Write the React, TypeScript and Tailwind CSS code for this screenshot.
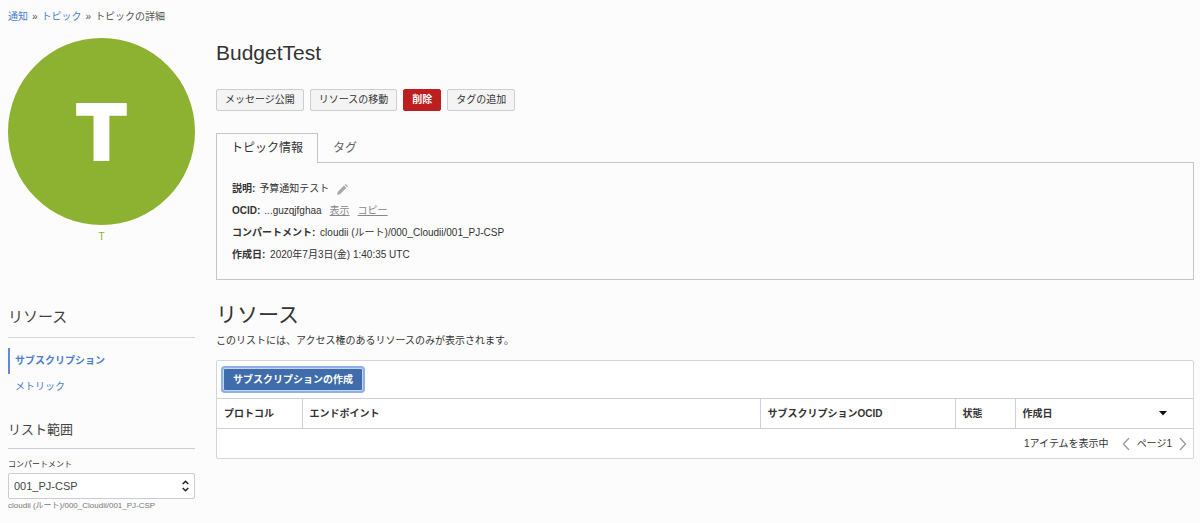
import React, { useState } from "react";

const columns = [
  { label: "プロトコル", width: "w-[85px]" },
  { label: "エンドポイント", width: "" },
  { label: "サブスクリプションOCID", width: "w-[195px]" },
  { label: "状態", width: "w-[60px]" },
];

const buttonBase = "h-[22px] rounded-xs border px-2 leading-5 whitespace-nowrap";

const Chevron: React.FC<{ d: string }> = ({ d }) => (
  <svg width="8" height="14" viewBox="0 0 8 14" fill="none" stroke="#9b9b9b" strokeWidth="1.3" aria-hidden="true">
    <path d={d} />
  </svg>
);

const Sidebar: React.FC = () => {
  const [compartment, setCompartment] = useState("001_PJ-CSP");

  return (
    <aside className="w-[187px] shrink-0">
      <div className="flex aspect-square items-center justify-center rounded-full bg-[#8db130] font-[Inter,sans-serif] text-[80px] font-black text-white">
        T
      </div>
      <div className="mt-0.5 text-center leading-5 text-[#8db130]">T</div>

      <h2 className="mt-[58px] border-b border-[#d4d4d8] pb-2 text-[15px] leading-6 text-[#444]">リソース</h2>
      <ul className="mt-[10px] leading-[26px] text-[#4c7dd0]">
        <li className="border-l-2 border-[#5f8adb] pl-[5px] font-bold">
          <a href="#subscriptions">サブスクリプション</a>
        </li>
        <li className="pl-[7px]">
          <a href="#metrics">メトリック</a>
        </li>
      </ul>

      <h2 className="mt-5 border-b border-[#c9ccd4] pb-2 text-[13px] leading-5 text-[#444]">リスト範囲</h2>
      <label htmlFor="compartment" className="mt-2 block text-[8px] leading-4">
        コンパートメント
      </label>
      <div className="relative">
        <select
          id="compartment"
          value={compartment}
          onChange={(e) => setCompartment(e.target.value)}
          className="h-[26px] w-full appearance-none rounded-xs border border-[#c9ccd4] bg-white px-[5px] text-[11px] text-[#444]"
        >
          <option>001_PJ-CSP</option>
        </select>
        <svg
          className="pointer-events-none absolute top-[7px] right-[6px]"
          width="7"
          height="12"
          viewBox="0 0 7 12"
          fill="none"
          stroke="#222"
          strokeWidth="1.5"
          aria-hidden="true"
        >
          <path d="M.7 4 3.5 1.2 6.3 4M.7 8l2.8 2.8L6.3 8" />
        </svg>
      </div>
      <p className="text-[8px] leading-[14px] text-[#777]">cloudii (ルート)/000_Cloudii/001_PJ-CSP</p>
    </aside>
  );
};

const TopicInfo: React.FC = () => (
  <div className="border border-[#c6c6c6] px-[15px] pt-[15px] pb-[13px] leading-[22px]">
    <div className="flex items-center gap-1">
      <b>説明:</b>
      <span>予算通知テスト</span>
      <button type="button" aria-label="編集" className="ml-1">
        <svg width="11" height="11" viewBox="0 0 11 11" fill="#a8a8a8" aria-hidden="true">
          <path d="M0 11 .8 7.7 7 1.5 9.4 3.9 3.2 10.1ZM7.7.8 8.3.2Q8.7-.1 9.1.3L10.7 1.9Q11 2.3 10.7 2.6L10.1 3.2Z" />
        </svg>
      </button>
    </div>
    <div className="flex">
      <b className="mr-1">OCID:</b>
      <span>...guzqjfghaa</span>
      <button type="button" className="ml-2 text-[#888] underline">表示</button>
      <button type="button" className="ml-2 text-[#888] underline">コピー</button>
    </div>
    <div>
      <b className="mr-0.5">コンパートメント:</b> cloudii (ルート)/000_Cloudii/001_PJ-CSP
    </div>
    <div>
      <b className="mr-0.5">作成日:</b> 2020年7月3日(金) 1:40:35 UTC
    </div>
  </div>
);

const Subscriptions: React.FC = () => (
  <div className="mt-2 rounded-xs border border-[#d3d5da] bg-white">
    <div className="px-[6px] py-[7px]">
      <button
        type="button"
        className="block h-[23px] rounded-xs border border-[#c3d5f2] bg-[#3f6cab] px-[9px] font-bold text-white ring-2 ring-[#8eb0e8]"
      >
        サブスクリプションの作成
      </button>
    </div>
    <table className="w-full table-fixed border-collapse border-y border-[#cdd0d9] text-left">
      <thead>
        <tr className="h-[30px]">
          {columns.map((col) => (
            <th key={col.label} className={`border-r border-[#cdd0d9] px-[7px] font-bold ${col.width}`}>
              {col.label}
            </th>
          ))}
          <th className="w-[178px] px-[7px] font-bold">
            <div className="flex items-center justify-between pr-[19px]">
              作成日
              <svg width="8" height="5" viewBox="0 0 8 5" fill="#111" aria-hidden="true">
                <path d="M0 0H8L4 4.5Z" />
              </svg>
            </div>
          </th>
        </tr>
      </thead>
    </table>
    <div className="flex h-[29px] items-center justify-end pr-[6px]">
      <span className="mr-[13px]">1アイテムを表示中</span>
      <button type="button" aria-label="前のページ">
        <Chevron d="M7 1 1.5 7 7 13" />
      </button>
      <span className="mx-[7px]">ページ1</span>
      <button type="button" aria-label="次のページ">
        <Chevron d="M1 1 6.5 7 1 13" />
      </button>
    </div>
  </div>
);

export default function App() {
  const [tab, setTab] = useState("info");

  return (
    <div className="min-h-screen bg-[#fcfcfc] pt-2 pr-[6px] pb-2 pl-2 font-['Liberation_Sans','Noto_Sans_CJK_JP',sans-serif] text-[10px] text-[#333]">
      <nav className="flex gap-1 leading-[18px] text-[#555]">
        <a href="#notifications" className="text-[#4c7dd0]">通知</a>
        <span>»</span>
        <a href="#topics" className="text-[#4c7dd0]">トピック</a>
        <span>»</span>
        <span>トピックの詳細</span>
      </nav>

      <div className="mt-3 flex gap-[21px]">
        <Sidebar />
        <main className="min-w-0 flex-1">
          <h1 className="text-[21px] leading-[30px]">BudgetTest</h1>
          <div className="mt-[21px] flex gap-[6px]">
            <button type="button" className={`${buttonBase} border-[#cdcdd2] bg-[#f4f4f4]`}>メッセージ公開</button>
            <button type="button" className={`${buttonBase} border-[#cdcdd2] bg-[#f4f4f4]`}>リソースの移動</button>
            <button type="button" className={`${buttonBase} border-[#bd1e1f] bg-[#bd1e1f] font-bold text-white`}>削除</button>
            <button type="button" className={`${buttonBase} border-[#cdcdd2] bg-[#f4f4f4]`}>タグの追加</button>
          </div>

          <div className="relative z-10 mt-[22px] -mb-px flex text-[12px] leading-[28px]" role="tablist">
            <button
              type="button"
              role="tab"
              aria-selected={tab === "info"}
              onClick={() => setTab("info")}
              className="border border-b-0 border-[#c6c6c6] bg-[#fcfcfc] px-[14px] pb-px"
            >
              トピック情報
            </button>
            <button
              type="button"
              role="tab"
              aria-selected={tab === "tags"}
              onClick={() => setTab("tags")}
              className="px-[15px] text-[#666]"
            >
              タグ
            </button>
          </div>
          <TopicInfo />

          <h2 className="mt-5 text-[21px] leading-[30px]">リソース</h2>
          <p className="leading-[22px]">このリストには、アクセス権のあるリソースのみが表示されます。</p>
          <Subscriptions />
        </main>
      </div>
    </div>
  );
}
